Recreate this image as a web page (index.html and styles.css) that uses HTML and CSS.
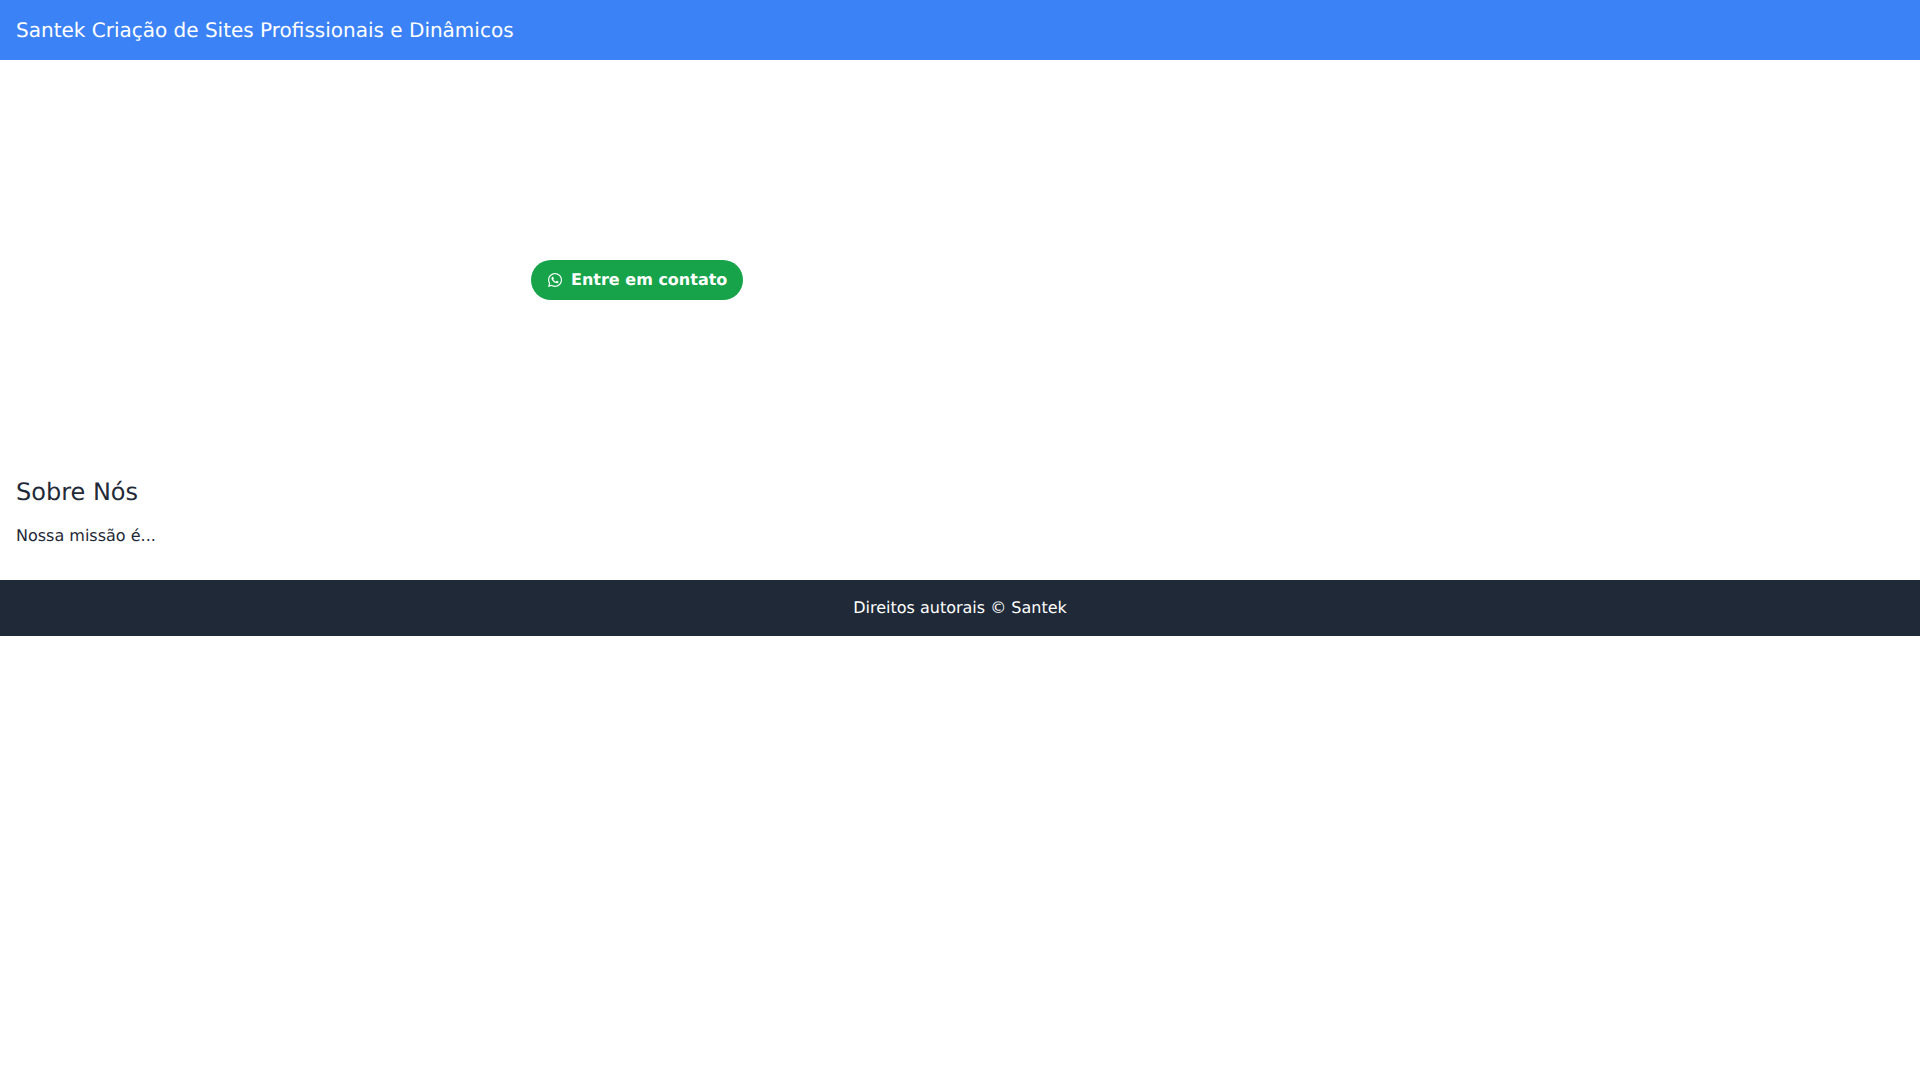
FILE: index.html
```html
<!DOCTYPE html>
<html lang="pt-BR">
<head>
<meta charset="utf-8">
<title>Santek</title>
<link rel="stylesheet" href="styles.css">
</head>
<body>
<header class="topbar">Santek Criação de Sites Profissionais e Dinâmicos</header>
<section class="hero">
  <a class="cta" href="#">
    <svg class="cta-icon" viewBox="0 0 448 512" fill="currentColor" aria-hidden="true"><path d="M380.9 97.1C339 55.1 283.2 32 223.9 32c-122.4 0-222 99.6-222 222 0 39.1 10.2 77.3 29.6 111L0 480l117.7-30.9c32.4 17.7 68.9 27 106.1 27h.1c122.3 0 224.1-99.6 224.1-222 0-59.3-25.2-115-67.1-157zm-157 341.6c-33.2 0-65.7-8.9-94-25.7l-6.7-4-69.8 18.3L72 359.2l-4.4-7c-18.5-29.4-28.2-63.3-28.2-98.2 0-101.7 82.8-184.5 184.6-184.5 49.3 0 95.6 19.2 130.4 54.1 34.8 34.9 56.2 81.2 56.1 130.5 0 101.8-84.9 184.6-186.6 184.6zm101.2-138.2c-5.5-2.8-32.8-16.2-37.9-18-5.1-1.9-8.8-2.8-12.5 2.8-3.7 5.6-14.3 18-17.6 21.8-3.2 3.7-6.5 4.2-12 1.4-32.6-16.3-54-29.1-75.5-66-5.7-9.8 5.7-9.1 16.3-30.3 1.8-3.7.9-6.9-.5-9.7-1.4-2.8-12.5-30.1-17.1-41.2-4.5-10.8-9.1-9.3-12.5-9.5-3.2-.2-6.9-.2-10.6-.2-3.7 0-9.7 1.4-14.8 6.9-5.1 5.6-19.4 19-19.4 46.3 0 27.3 19.9 53.7 22.6 57.4 2.8 3.7 39.1 59.7 94.8 83.8 35.2 15.2 49 16.5 66.6 13.9 10.7-1.6 32.8-13.4 37.4-26.4 4.6-13 4.6-24.1 3.2-26.4-1.3-2.5-5-3.9-10.5-6.6z"/></svg>
    <span>Entre em contato</span>
  </a>
</section>
<section class="about">
  <h2 class="about-title">Sobre Nós</h2>
  <p class="about-text">Nossa missão é...</p>
</section>
<footer class="footer">Direitos autorais © Santek</footer>
</body>
</html>
```
FILE: styles.css
```css
* { box-sizing: border-box; }
html, body { margin: 0; padding: 0; background: #fff; }
body { font-family: "DejaVu Sans", sans-serif; font-size: 16px; line-height: 24px; color: #1f2937; text-rendering: geometricPrecision; will-change: opacity; }
.topbar { height: 60px; padding: 16px; background: #3b82f6; color: #fff; font-size: 20px; line-height: 28px; }
.hero { height: 400px; padding: 200px 0 0 531px; }
.cta { display: inline-flex; align-items: center; gap: 8px; height: 40px; padding: 0 16px; border-radius: 20px; background: #16a34a; color: #fff; font-weight: 700; text-decoration: none; }
.cta-icon { width: 16px; height: 16px; }
.about { padding: 16px 16px 32px; }
.about-title { margin: 0 0 16px; font-size: 24px; line-height: 32px; font-weight: 400; }
.about-text { margin: 0; }
.footer { height: 56px; padding: 16px; background: #1f2937; color: #fff; text-align: center; }
```
